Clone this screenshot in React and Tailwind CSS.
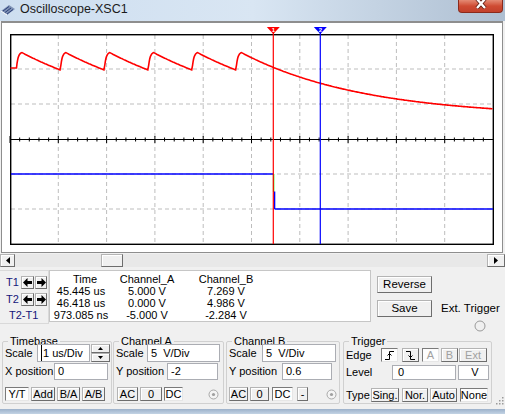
import React from 'react';

const gx = (i) => 10 + 48.3 * i;

// sawtooth on channel B, then the long decay after the last peak
function redTrace() {
  const pts = [[10.5, 68], [16.5, 68]];
  const T = 43.9;
  let ys = 68;
  for (let k = 0; k < 6; k++) {
    const xm = 16.5 + k * T;
    const xp = xm + 5.5;
    for (let t = 0.5; t <= 5.5; t += 0.5) {
      const f = (1 - Math.exp(-t / 1.6)) / (1 - Math.exp(-5.5 / 1.6));
      pts.push([xm + t, ys - (ys - 52.6) * f]);
    }
    const end = k < 5 ? 16.5 + (k + 1) * T : 493;
    for (let x = xp + 1; x <= end; x += 1) {
      pts.push([x, 117 - 64.4 * Math.exp(-(x - xp) / 122)]);
    }
    ys = pts[pts.length - 1][1];
  }
  return pts.map((p) => p[0].toFixed(1) + ',' + p[1].toFixed(1)).join(' ');
}

const raised =
  'border border-[#b4b4b4] border-r-[#6d6d6d] border-b-[#6d6d6d] bg-[#f0f0f0] shadow-[inset_1px_1px_0_#ffffff]';
const sunken = 'border border-[#7a7a7a] border-r-[#e6e6e6] border-b-[#e6e6e6] bg-[#fdfdfd]';
const field = 'bg-white border border-[#abadb3] flex items-center pl-[3px]';

const Btn = ({ children, className = '', down = false, off = false }) => (
  <div
    className={`flex items-center justify-center leading-none ${down ? sunken : raised} ${
      off ? 'text-[#a0a0a0]' : ''
    } ${className}`}
  >
    {children}
  </div>
);

const Radio = ({ className = '' }) => (
  <svg width="11" height="11" viewBox="0 0 11 11" className={className}>
    <circle cx="5.5" cy="5.5" r="4.5" fill="#f4f4f4" stroke="#a8a8a8" />
    <circle cx="5.5" cy="5.5" r="1.6" fill="#a0a0a0" />
  </svg>
);

const Arrow = ({ right }) => (
  <svg width="9" height="9" viewBox="0 0 9 9" className={right ? 'scale-x-[-1]' : ''}>
    <path d="M0 4.5 L4.5 0 V3 H9 V6 H4.5 V9 Z" fill="#000" />
  </svg>
);

const Plot = () => {
  const minor = [];
  for (let x = 10; x <= 493; x += 9.66) minor.push(x);
  return (
    <svg width="500" height="229" viewBox="2 23 500 229" className="block">
      {[1, 2, 3, 4, 5, 6, 7, 8, 9].map((i) => (
        <line key={'v' + i} x1={gx(i)} y1="35" x2={gx(i)} y2="244" stroke="#bdbdbd" strokeDasharray="4 3" />
      ))}
      {[69, 104, 174, 209].map((y) => (
        <line key={'h' + y} x1="11" y1={y} x2="493" y2={y} stroke="#bdbdbd" strokeDasharray="4 3" />
      ))}
      <line x1="10" y1="139.5" x2="493" y2="139.5" stroke="#000" strokeWidth="1.2" />
      {minor.map((x, i) => (
        <line
          key={'t' + i}
          x1={x}
          x2={x}
          y1={i % 5 === 0 ? 136 : 137.5}
          y2={i % 5 === 0 ? 143 : 141.5}
          stroke="#000"
          strokeWidth="1"
        />
      ))}
      <rect x="10.7" y="34.7" width="482.6" height="209.6" fill="none" stroke="#000" strokeWidth="1.4" />
      <polyline points={redTrace()} fill="none" stroke="#ff0000" strokeWidth="1.6" />
      <polyline points="11,174 273.3,174" fill="none" stroke="#0000ff" strokeWidth="1.4" />
      <line x1="273.6" y1="174" x2="273.6" y2="192" stroke="#00ff00" strokeWidth="1.4" />
      <line x1="274.6" y1="191.5" x2="274.6" y2="209" stroke="#0000ff" strokeWidth="1.4" />
      <polyline points="274.6,209 493,209" fill="none" stroke="#0000ff" strokeWidth="1.4" />
      <line x1="273.3" y1="30" x2="273.3" y2="244" stroke="#ff0000" strokeWidth="1.2" />
      <line x1="320.3" y1="30" x2="320.3" y2="244" stroke="#0000ff" strokeWidth="1.2" />
      <polygon points="266.8,27 279.8,27 273.3,34" fill="#ff0000" />
      <text x="273.3" y="32" fontSize="6" fill="#fff" textAnchor="middle" fontFamily="Liberation Sans" fontWeight="bold">
        1
      </text>
      <polygon points="313.8,27 326.8,27 320.3,34" fill="#0000ff" />
      <text x="320.3" y="32" fontSize="6" fill="#fff" textAnchor="middle" fontFamily="Liberation Sans" fontWeight="bold">
        2
      </text>
    </svg>
  );
};

export default function App() {
  return (
    <div className="relative w-[505px] h-[414px] overflow-hidden bg-[#f0f0f0] text-[11px] text-black font-['Liberation_Sans_Narrow','Liberation_Sans',sans-serif]">
      {/* title bar */}
      <div className="h-[21px] flex items-start bg-gradient-to-r from-[#cddef0] via-[#d9e6f3] to-[#aebfd2]">
        <svg width="16" height="12" viewBox="0 0 16 12" className="mt-[4px]">
          <path d="M1 7 L9 1 L15 5 L7 11 Z" fill="#7f93b5" />
          <path d="M3 7 L9 2.5 M5 8.5 L11 4 M7 10 L13 5.5" stroke="#2c3f7a" strokeWidth="1" />
          <path d="M1 7 L7 11" stroke="#ffffff" strokeWidth="1" />
        </svg>
        <span className="ml-[4px] leading-[19px] text-[12.5px] text-[#1b1b1b] font-['Liberation_Sans',sans-serif]">
          Oscilloscope-XSC1
        </span>
        <div className="ml-auto mr-[2px] w-[45px] h-[13px] rounded-b-[4px] border border-t-0 border-[#8b2a1c] bg-gradient-to-b from-[#e48a74] via-[#cf4b33] to-[#c2412c] flex justify-center">
          <svg width="14" height="9" viewBox="0 0 14 9">
            <path d="M3 -1 L11 8 M11 -1 L3 8" stroke="#5a1a10" strokeWidth="4" />
            <path d="M3 -1 L11 8 M11 -1 L3 8" stroke="#ffffff" strokeWidth="2.4" />
          </svg>
        </div>
      </div>

      {/* screen */}
      <div className="ml-[1px] w-[502px] border-t-2 border-x border-b border-[#8e8e8e] bg-white">
        <Plot />
      </div>

      {/* scrollbar */}
      <div className="mt-[1px] h-[13px] flex">
        <div className={`w-[15px] h-[13px] ${raised} flex items-center justify-center`}>
          <svg width="4" height="7" viewBox="0 0 4 7">
            <path d="M4 0 V7 L0 3.5 Z" fill="#000" />
          </svg>
        </div>
        <div className="flex-1 flex bg-[#e8e8e8]">
          <div className="w-[86px]" />
          <div className={`w-[22px] h-[13px] ${raised}`} />
        </div>
        <div className={`w-[18px] h-[13px] ${raised} flex items-center justify-center`}>
          <svg width="4" height="7" viewBox="0 0 4 7">
            <path d="M0 0 V7 L4 3.5 Z" fill="#000" />
          </svg>
        </div>
      </div>

      {/* readout row */}
      <div className="mt-[3px] h-[54px] flex items-start">
        <div className="w-[49px] h-[54px] border border-l-0 border-[#d9d9d9] text-[#16167a]">
          <div className="mt-[5px] flex items-center h-[13px]">
            <span className="w-[21px] pl-[6px]">T1</span>
            <Btn className="w-[13px] h-[13px]">
              <Arrow />
            </Btn>
            <Btn className="ml-[1px] w-[12px] h-[13px]">
              <Arrow right />
            </Btn>
          </div>
          <div className="mt-[4px] flex items-center h-[13px]">
            <span className="w-[21px] pl-[6px]">T2</span>
            <Btn className="w-[13px] h-[13px]">
              <Arrow />
            </Btn>
            <Btn className="ml-[1px] w-[12px] h-[13px]">
              <Arrow right />
            </Btn>
          </div>
          <div className="mt-[3px] pl-[9px] leading-[12px]">T2-T1</div>
        </div>
        <div className="w-[322px] h-[52px] border border-[#c6c6c6] bg-white pt-[2px] leading-[12px]">
          <div className="grid grid-cols-[62px_70px_88px] text-center">
            <span className="pl-[8px]">Time</span>
            <span>Channel_A</span>
            <span>Channel_B</span>
            <span>45.445 us</span>
            <span>5.000 V</span>
            <span>7.269 V</span>
            <span>46.418 us</span>
            <span>0.000 V</span>
            <span>4.986 V</span>
            <span>973.085 ns</span>
            <span>-5.000 V</span>
            <span>-2.284 V</span>
          </div>
        </div>
        <div className="ml-[6px] w-[55px] flex flex-col">
          <Btn className="mt-[6px] h-[17px] text-[11.5px]">Reverse</Btn>
          <Btn className="mt-[7px] h-[17px] text-[11.5px]">Save</Btn>
        </div>
        <div className="ml-[9px] flex flex-col">
          <span className="mt-[32px] leading-[12px] text-[11.5px]">Ext. Trigger</span>
          <svg width="12" height="12" viewBox="0 0 12 12" className="ml-[33px] mt-[6px]">
            <circle cx="6" cy="6" r="5" fill="none" stroke="#9a9a9a" />
          </svg>
        </div>
      </div>

      {/* control groups */}
      <div className="mt-[11px] flex items-start">
        <fieldset className="ml-[2px] w-[110px] h-[69px] border border-[#d0d0d0] rounded-[2px]">
          <legend className="ml-[5px] px-[2px] leading-[12px]">Timebase</legend>
          <div className="-mt-[3px] flex items-center h-[18px]">
            <span className="w-[34px] pl-[2px]">Scale</span>
            <div className={`${field} w-[53px] h-[18px]`}>
              <span className="border-l border-black pl-[1px]">1 us/Div</span>
            </div>
            <div className="ml-[1px] w-[19px] h-[18px] flex flex-col">
              <Btn className="h-[9px]">
                <svg width="5" height="3" viewBox="0 0 5 3">
                  <path d="M0 3 L2.5 0 L5 3 Z" fill="#000" />
                </svg>
              </Btn>
              <Btn className="h-[9px]">
                <svg width="5" height="3" viewBox="0 0 5 3">
                  <path d="M0 0 L2.5 3 L5 0 Z" fill="#000" />
                </svg>
              </Btn>
            </div>
          </div>
          <div className="mt-[1px] flex items-center h-[17px]">
            <span className="w-[51px] pl-[2px]">X position</span>
            <div className={`${field} w-[54px] h-[17px]`}>0</div>
          </div>
          <div className="mt-[7px] flex items-center gap-[2px] pl-[2px]">
            <Btn down className="w-[24px] h-[14px]">Y/T</Btn>
            <Btn className="w-[24px] h-[14px]">Add</Btn>
            <Btn className="w-[23px] h-[14px]">B/A</Btn>
            <Btn className="w-[23px] h-[14px]">A/B</Btn>
          </div>
        </fieldset>

        <fieldset className="ml-[1px] w-[111px] h-[69px] border border-[#d0d0d0] rounded-[2px]">
          <legend className="ml-[5px] px-[2px] leading-[12px]">Channel A</legend>
          <div className="-mt-[3px] flex items-center h-[18px]">
            <span className="w-[33px] pl-[2px]">Scale</span>
            <div className={`${field} w-[73px] h-[18px]`}>5&nbsp;&nbsp;V/Div</div>
          </div>
          <div className="mt-[1px] flex items-center h-[17px]">
            <span className="w-[53px] pl-[2px]">Y position</span>
            <div className={`${field} w-[51px] h-[17px]`}>-2</div>
          </div>
          <div className="mt-[7px] flex items-center pl-[3px]">
            <Btn className="w-[21px] h-[14px]">AC</Btn>
            <Btn className="ml-[2px] w-[22px] h-[14px]">0</Btn>
            <Btn down className="ml-[2px] w-[19px] h-[14px]">DC</Btn>
            <Radio className="ml-[25px]" />
          </div>
        </fieldset>

        <fieldset className="ml-[2px] w-[114px] h-[69px] border border-[#d0d0d0] rounded-[2px]">
          <legend className="ml-[5px] px-[2px] leading-[12px]">Channel B</legend>
          <div className="-mt-[3px] flex items-center h-[18px]">
            <span className="w-[35px] pl-[2px]">Scale</span>
            <div className={`${field} w-[74px] h-[18px]`}>5&nbsp;&nbsp;V/Div</div>
          </div>
          <div className="mt-[1px] flex items-center h-[17px]">
            <span className="w-[55px] pl-[2px]">Y position</span>
            <div className={`${field} w-[50px] h-[17px]`}>0.6</div>
          </div>
          <div className="mt-[7px] flex items-center pl-[2px]">
            <Btn className="w-[19px] h-[14px]">AC</Btn>
            <Btn className="ml-[2px] w-[19px] h-[14px]">0</Btn>
            <Btn down className="ml-[3px] w-[21px] h-[14px]">DC</Btn>
            <Btn className="ml-[4px] w-[11px] h-[14px]">-</Btn>
            <Radio className="ml-[18px]" />
          </div>
        </fieldset>

        <fieldset className="ml-[3px] w-[149px] h-[69px] border border-[#d0d0d0] rounded-[2px]">
          <legend className="ml-[5px] px-[2px] leading-[12px]">Trigger</legend>
          <div className="mt-[1px] flex items-center h-[14px]">
            <span className="w-[37px] pl-[2px]">Edge</span>
            <Btn down className="w-[17px] h-[14px]">
              <svg width="9" height="9" viewBox="0 0 9 9">
                <path d="M0 8.5 H4.5 V0.5 H9 M2.5 4.5 L4.5 2.5 L6.5 4.5" fill="none" stroke="#000" strokeWidth="1" />
              </svg>
            </Btn>
            <Btn className="ml-[4px] w-[17px] h-[14px]">
              <svg width="9" height="9" viewBox="0 0 9 9">
                <path d="M0 0.5 H4.5 V8.5 H9 M2.5 4.5 L4.5 6.5 L6.5 4.5" fill="none" stroke="#000" strokeWidth="1" />
              </svg>
            </Btn>
            <Btn down off className="ml-[3px] w-[17px] h-[14px]">A</Btn>
            <Btn off className="ml-[2px] w-[17px] h-[14px]">B</Btn>
            <Btn off className="ml-[1px] w-[28px] h-[14px]">Ext</Btn>
          </div>
          <div className="mt-[3px] flex items-center h-[15px]">
            <span className="w-[48px] pl-[2px]">Level</span>
            <div className={`${field} w-[64px] h-[15px] pl-[5px]`}>0</div>
            <div className={`${field} ml-[2px] w-[31px] h-[15px] justify-center pl-0`}>V</div>
          </div>
          <div className="mt-[8px] flex items-center h-[14px]">
            <span className="w-[27px] pl-[2px]">Type</span>
            <Btn className="w-[28px] h-[14px]">Sing.</Btn>
            <Btn className="ml-[3px] w-[26px] h-[14px]">Nor.</Btn>
            <Btn className="ml-[2px] w-[27px] h-[14px]">Auto</Btn>
            <Btn down className="ml-[3px] w-[28px] h-[14px]">None</Btn>
          </div>
        </fieldset>
      </div>

      {/* size grip */}
      <svg width="10" height="10" viewBox="0 0 10 10" className="absolute left-[494px] top-[397px]">
        {[
          [8, 0],
          [8, 3],
          [5, 3],
          [8, 6],
          [5, 6],
          [2, 6],
        ].map(([x, y], i) => (
          <rect key={i} x={x} y={y} width="1.5" height="1.5" fill="#9a9a9a" />
        ))}
      </svg>

      {/* window bottom frame */}
      <div className="absolute left-0 right-0 bottom-0 h-[5px] bg-gradient-to-b from-[#9cb1ca] to-[#c3d3e4]" />
    </div>
  );
}
